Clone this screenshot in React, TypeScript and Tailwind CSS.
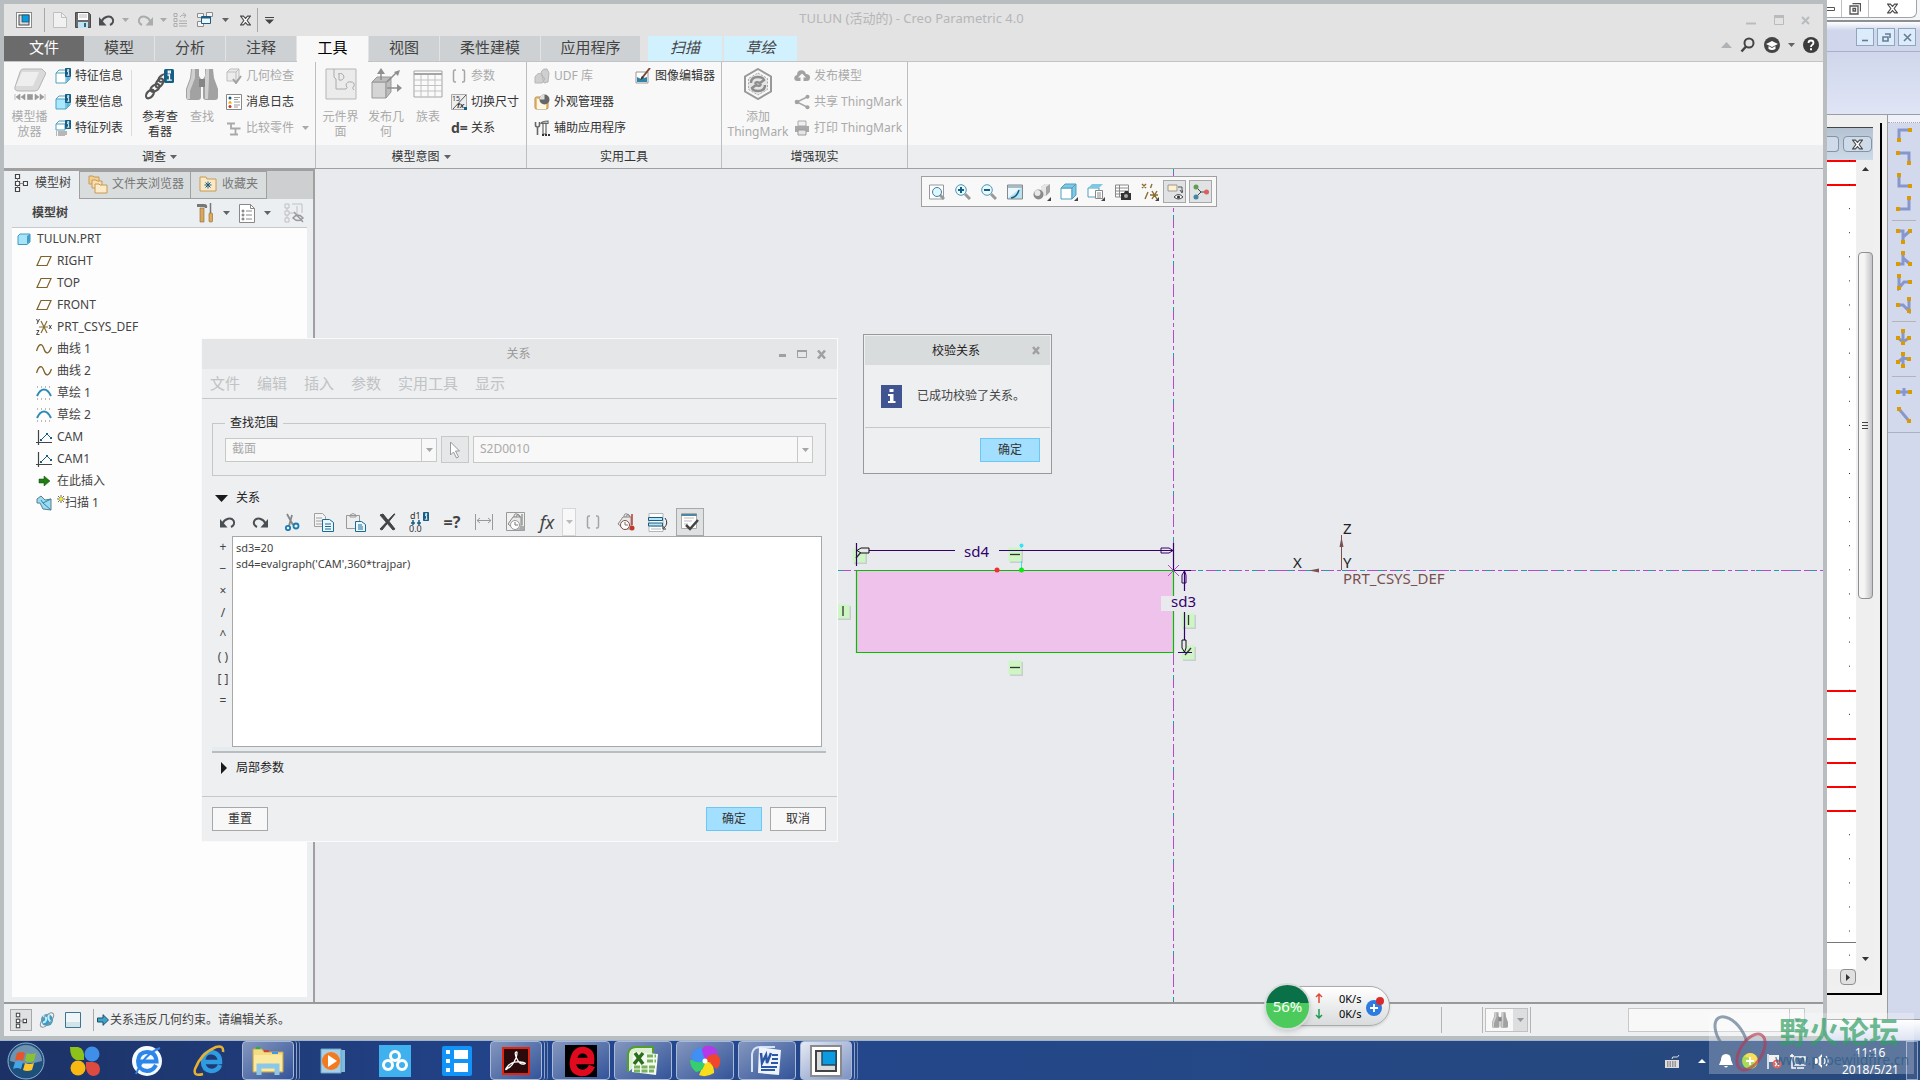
import type { ReactNode } from "react";
import clsx from "clsx";

type IconProps = { size?: number; w?: number; h?: number; vb?: string; children: ReactNode };

const Svg = ({ size = 16, w, h, vb, children }: IconProps) => (
  <svg
    width={w ?? size}
    height={h ?? size}
    viewBox={vb ?? `0 0 ${w ?? size} ${h ?? size}`}
    fill="none"
    className="shrink-0"
    aria-hidden="true"
  >
    {children}
  </svg>
);

const Caret = ({ color = "#5f6368" }: { color?: string }) => (
  <Svg w={7} h={4}>
    <path d="M0 0h7L3.500 4z" fill={color} />
  </Svg>
);

const InfoBadge = ({ x, y, s = 1 }: { x: number; y: number; s?: number }) => (
  <g transform={`translate(${x} ${y}) scale(${s})`}>
    <rect width="6" height="9" rx="0.8" fill="#155e86" />
    <path d="M2 3.600h1.600V7M1.800 7.200h2.600M2.600 1.600h1.200v1H2.600z" stroke="#fff" strokeWidth="0.900" />
  </g>
);

/* ---------- title bar icons ---------- */

const CreoIcon = ({ size = 16 }: { size?: number }) => (
  <Svg size={size} vb="0 0 16 16">
    <rect x="0.500" y="0.500" width="15" height="15" fill="#fff" stroke="#8a8a8a" />
    <rect x="3" y="3" width="10" height="10" fill="#d9dcdc" stroke="#444" />
    <path d="M6 3h7v7H6z" fill="#0a9be0" stroke="#24465a" strokeWidth="0.700" />
  </Svg>
);

const NewIcon = () => (
  <Svg w={14} h={16}>
    <path d="M.5.5h8l5 5v10H.5z" fill="#f1f1f1" stroke="#c0c0c0" />
    <path d="M8.500.5v5h5" stroke="#c0c0c0" />
  </Svg>
);

const SaveIcon = () => (
  <Svg>
    <path d="M.5.5h13l2 2v13H.5z" fill="#6b6b6b" stroke="#4a4a4a" />
    <rect x="3" y="1" width="10" height="7" fill="#fff" />
    <path d="M4 3h8M4 5h8" stroke="#bbb" />
    <rect x="3" y="10" width="10" height="6" fill="#bfe3f3" />
    <rect x="9" y="11" width="2" height="4" fill="#31637c" />
  </Svg>
);

const UndoIcon = ({ color = "#4a4f54" }: { color?: string }) => (
  <Svg w={16} h={12}>
    <path d="M2.500 7.500C5 2.500 11 1 13.500 4.500c1.500 2.500.500 5-2.500 6.500" stroke={color} strokeWidth="2" />
    <path d="M0 3v8.500h7.500z" fill={color} />
  </Svg>
);

const RedoIcon = ({ color = "#a9adb0" }: { color?: string }) => (
  <Svg w={16} h={12}>
    <path d="M13.500 7.500C11 2.500 5 1 2.500 4.500 1 7 2 9.500 5 11" stroke={color} strokeWidth="2" />
    <path d="M16 3v8.500H8.500z" fill={color} />
  </Svg>
);

const RegenIcon = () => (
  <Svg>
    <path d="M1 1.500h3v3H1zM1 6.500h3v3H1zM1 11.500h3v3H1zM6 9h8M6 11.500h8M6 14h8M7 5l2-2 3 .5M10 1l3 2-2 3" stroke="#adadad" />
  </Svg>
);

const WindowsIcon = () => (
  <Svg>
    <path d="M.5 1.500h6v4h-6zM9.500.5h6v4h-6zM.5 9.500h6v5h-6z" fill="#f5f5f5" stroke="#8d8d8d" />
    <path d="M4.500 4.500h9v7h-9z" fill="#eaf7fd" stroke="#1c5d80" />
    <path d="M4.500 5.500h9" stroke="#1c5d80" strokeWidth="2" />
  </Svg>
);

const CrossOutline = ({ w = 11 }: { w?: number }) => (
  <Svg w={w} h={w} vb="0 0 12 11">
    <path d="M.7.7h3L6 3.200 8.300.7h3L7.800 5.500l3.500 4.800h-3L6 7.800l-2.300 2.500h-3l3.500-4.800z" fill="#fff" stroke="#4a4a4a" strokeWidth="1.200" />
  </Svg>
);

/* ---------- ribbon icons ---------- */

const PlayerIcon = () => (
  <Svg size={32}>
    <path d="M9 1h19l4 4-7 15q-1 3-4 3H5q-5 0-4-4L6 4q1-3 3-3z" fill="#dadada" stroke="#b5b5b5" />
    <path d="M8 4h17l-6 14H2z" fill="#eee" />
    <path d="M1 26v6M2 29l4-3v6zM7 29l4-3v6zM31 26v6M30 29l-4-3v6zM25 29l-4-3v6zM13.500 26.500h5v5h-5z" fill="#999" stroke="#999" strokeWidth="0.600" />
  </Svg>
);

const CubeInfo = ({ fill, lines }: { fill: string; lines?: boolean }) => (
  <Svg>
    <path d={lines ? "M1 4h9v6H1z" : "M1 5h10v10H1z"} fill={fill} stroke="#4f9fbf" />
    <path d={lines ? "M1 4l3-3h7" : "M1 5l3-3h7M11 15l4-4V9"} stroke="#4f9fbf" />
    {!lines && <path d="M11.500 6l3 3v2l-3 3.500z" fill="#5cb8dc" />}
    {lines && <path d="M1 12h1M3 12h9M1 14h1M3 14h9M1 16h1M3 16h7" stroke="#777" />}
    <InfoBadge x={10} y={0} />
  </Svg>
);

const ChainIcon = () => (
  <Svg size={32}>
    <g stroke="#555" strokeWidth="2.200">
      <ellipse cx="6" cy="26" rx="5" ry="3" transform="rotate(-50 6 26)" />
      <ellipse cx="11" cy="20" rx="5" ry="3" transform="rotate(-35 11 20)" />
      <ellipse cx="15.500" cy="15" rx="5" ry="3" transform="rotate(-55 15.500 15)" />
      <ellipse cx="19" cy="10" rx="5" ry="3" transform="rotate(-35 19 10)" />
    </g>
    <rect x="20" y="1" width="10" height="14" rx="1.500" fill="#155e86" />
    <path d="M23.500 7h2v5M22.800 12.200h5M24.300 3.200h2v1.600h-2z" stroke="#fff" strokeWidth="1.300" />
  </Svg>
);

const Binoculars = ({ w = 32, h = 31 }: { w?: number; h?: number }) => (
  <Svg w={w} h={h} vb="0 0 32 31">
    <path d="M5 0h8v7l2 3v18q0 3-3 3H3q-3 0-3-3V20L4 9zM27 0h-8v7l-2 3v18q0 3 3 3h9q3 0 3-3V20L28 9z" fill="#a2a2a2" />
    <path d="M6 0h3v9L4 22v8H1V20L5 9zM20 0h3v9l-1 21h-3V9z" fill="#cfcfcf" />
    <path d="M13 10h6v8h-6z" fill="#858585" />
  </Svg>
);

const GeomCheck = () => (
  <Svg>
    <path d="M1 4l3-3h9v9l-3 3H1zM1 4h9v9M10 4l3-3" fill="#ececec" stroke="#bdbdbd" />
    <path d="M7 11l3 4 5-7" stroke="#a2a2a2" strokeWidth="2" />
  </Svg>
);

const LogIcon = () => (
  <Svg>
    <path d="M.5.5h15v15H.5z" fill="#fff" stroke="#888" />
    <circle cx="4" cy="4" r="1.500" fill="#155e86" />
    <path d="M2 9.500L4 6.500l2 3z" fill="#e8a800" />
    <circle cx="4" cy="12.500" r="1.500" fill="#c0392b" />
    <path d="M8 3.500h6M8 5.500h4M8 8h6M8 11h6M8 13h4" stroke="#999" />
  </Svg>
);

const CompareIcon = () => (
  <Svg>
    <path d="M1 3.500h8M5 3.500v5h9.500M9.500 8.500V14M4 14.500h8" stroke="#a9a9a9" strokeWidth="1.800" />
  </Svg>
);

const ComponentIcon = () => (
  <Svg size={32}>
    <path d="M1 1h30v30H1z" fill="#ebebeb" stroke="#b5b5b5" />
    <path d="M9 1v5q-1 4 2 5v10h10q2-1 0-4 1-4 5-3 4 0 3 4-3 2 0 4M13 6q5-2 6 3-1 4-5 3v-6" stroke="#aaa" />
  </Svg>
);

const PublishGeom = () => (
  <Svg size={32}>
    <path d="M2 14h14v16H2z" fill="#d5d5d5" stroke="#999" />
    <path d="M2 14l5-5h14l-5 5zM16 14l5-5v15l-5 6z" fill="#bcbcbc" stroke="#999" />
    <path d="M11 12V4M17 14L27 4M17 20h11" stroke="#8f8f8f" strokeWidth="1.500" />
    <path d="M11 0l4 6H7zM30 2l-2 6-4-4zM32 20l-5 4v-8z" fill="#8f8f8f" />
  </Svg>
);

const TableIcon = () => (
  <Svg w={30} h={30}>
    <path d="M1 2h28v26H1z" fill="#fafafa" stroke="#a5a5a5" />
    <path d="M1 5h28" stroke="#a5a5a5" strokeWidth="2" />
    <path d="M8 6v22M15 6v22M22 6v22M1 11h28M1 16.500h28M1 22h28" stroke="#c2c2c2" />
  </Svg>
);

const ParamIcon = ({ color = "#a5a5a5" }: { color?: string }) => (
  <Svg>
    <path d="M5 2H4Q2.500 2 2.500 3.500v9Q2.500 14 4 14h1M11 2h1q1.500 0 1.500 1.500v9q0 1.500-1.500 1.500h-1" stroke={color} strokeWidth="1.500" />
  </Svg>
);

const SwitchDim = () => (
  <Svg>
    <path d="M.5.5h15v15H.5z" fill="#eee" stroke="#aaa" />
    <path d="M15 1L2 15" stroke="#555" />
    <text x="1" y="7" fontSize="7" fill="#333" fontFamily="Noto Sans">15</text>
    <text x="6" y="14" fontSize="8" fontStyle="italic" fontWeight="700" fill="#333" fontFamily="Liberation Sans">fx</text>
    <path d="M13 13h3v3h-3z" fill="#155e86" />
  </Svg>
);

const DEquals = () => <span className="w-4 shrink-0 text-sm leading-4 font-bold text-[#444]">d=</span>;

const UdfIcon = () => (
  <Svg>
    <path d="M1 9q3-5 6-3l4 5-3 4H1zM7 4q2-4 6-3l2 4-1 9-4 1z" fill="#cfcfcf" stroke="#b5b5b5" />
  </Svg>
);

const AppearanceIcon = () => (
  <Svg>
    <rect x="1" y="3" width="13" height="12" rx="1.500" fill="#eebf78" stroke="#b98b45" />
    <path d="M3 5h8l1 3v7H3z" fill="#fff7e6" />
    <circle cx="10.500" cy="5.500" r="5" fill="#666" />
    <path d="M10.500.5v5h-5q.5-5 5-5z" fill="#ddd" />
  </Svg>
);

const AuxIcon = () => (
  <Svg>
    <path d="M1.500 2v3q0 2 2 2t2-2V2M3.500 7v8" stroke="#666" strokeWidth="1.600" />
    <path d="M7 3.500q1-2.500 7-2.500v2.500zM9 3h3v11H9z" fill="#fff" stroke="#666" strokeWidth="1.200" />
    <path d="M8 15h2M11 15h2M14 15h2" stroke="#333" strokeWidth="2" />
  </Svg>
);

const ImageEdit = () => (
  <Svg>
    <path d="M1 4h12v11H1z" fill="#fff" stroke="#999" />
    <path d="M2 9l4 2 6-2v5H2z" fill="#2f86a8" />
    <path d="M15 0L7 10" stroke="#7a4a32" strokeWidth="2" />
    <path d="M7 8l-2 4 4-2z" fill="#333" />
  </Svg>
);

const ThingMark = () => (
  <Svg w={30} h={32}>
    <path d="M15 1l13 7.500v15L15 31 2 23.500v-15z" stroke="#999" strokeWidth="2" />
    <path d="M15 5l9.500 5.500v11L15 27l-9.500-5.500v-11z" fill="#e5e5e5" stroke="#aaa" strokeDasharray="2 1.500" />
    <path d="M8 15q0-6 7-6 5 0 6 3l-4 3q-4-2-5 1M22 17q0 6-7 6-5 0-6-3l4-3q4 2 5-1" stroke="#8d8d8d" strokeWidth="2.400" />
  </Svg>
);

const CloudUp = () => (
  <Svg>
    <path d="M3.500 13Q0 13 .3 9.500.8 7 3 7 3 2.500 7.500 2.300 11 2.500 12 6q4 0 4 3.500T12.500 13H9.500V9.500H12L8 5.500 4 9.500h2.500V13z" fill="#a2a2a2" />
  </Svg>
);

const ShareIcon = () => (
  <Svg>
    <path d="M14 2.500L3 8l11 5.500" stroke="#a8a8a8" strokeWidth="1.500" />
    <circle cx="3" cy="8" r="2.300" fill="#a2a2a2" />
    <circle cx="13.500" cy="2.800" r="2" fill="#a2a2a2" />
    <circle cx="13.500" cy="13.200" r="2" fill="#a2a2a2" />
  </Svg>
);

const PrintIcon = () => (
  <Svg>
    <path d="M4 1h8v5H4z" fill="#eee" stroke="#aaa" />
    <path d="M1 6h14v6H1z" fill="#a8a8a8" />
    <path d="M4 10h8v5H4z" fill="#e5e5e5" stroke="#9a9a9a" />
  </Svg>
);

/* ---------- tree icons ---------- */

const TreeGlyph = ({ w = 14, h = 20 }: { w?: number; h?: number }) => (
  <Svg w={w} h={h} vb="0 0 14 20">
    <path d="M1.500 1.500h4v4h-4zM1.500 8.500h4v4h-4zM1.500 14.500h4v4h-4zM9.500 8.500h4v4h-4z" fill="#fff" stroke="#444" strokeWidth="1.200" />
    <path d="M3.500 5.500v3M3.500 12.500v2M5.500 10.500h4" stroke="#888" />
  </Svg>
);

const FoldersIcon = () => (
  <Svg w={20} h={20}>
    <path d="M1 2h4l1 1h5v7H1z" fill="#f3cf95" stroke="#c69a55" />
    <path d="M4 6h4l1 1h5v7H4z" fill="#f9dfb2" stroke="#c69a55" />
    <path d="M7 10h4l1 1h7v8H7z" fill="#fdebc8" stroke="#c69a55" />
  </Svg>
);

const FavIcon = () => (
  <Svg w={18} h={16}>
    <path d="M1 1h6l1 2h9v12H1z" fill="#fce8c4" stroke="#c69a55" />
    <path d="M9 5.500v7M5.500 9h7M6.500 6.500l5 5M11.500 6.500l-5 5" stroke="#155e86" />
  </Svg>
);

const ToolsIcon = () => (
  <Svg w={18} h={20}>
    <path d="M1 1h7q4 0 3 4H9l-1-1H1z" fill="#777" />
    <path d="M4 5h4v14H4z" fill="#d8a860" stroke="#8a642c" strokeWidth="0.600" />
    <path d="M14.500 0v11" stroke="#777" strokeWidth="1.500" />
    <rect x="13" y="10" width="3.500" height="9" rx="1" fill="#e0aa58" stroke="#8a642c" strokeWidth="0.600" />
  </Svg>
);

const ListDoc = () => (
  <Svg w={16} h={19}>
    <path d="M.5.5h11l4 4v14H.5z" fill="#fff" stroke="#888" />
    <circle cx="4" cy="7" r="1" stroke="#666" />
    <circle cx="4" cy="11" r="1" stroke="#666" />
    <circle cx="4" cy="15" r="1" stroke="#666" />
    <path d="M7 7h6M7 11h6M7 15h6M11.500.5v4h4" stroke="#888" />
  </Svg>
);

const HideTree = () => (
  <Svg w={20} h={20}>
    <path d="M1 1h4v4H1zM1 8h4v4H1zM1 15h4v4H1zM3 5v3M3 12v3M5 10h5M8 1h10v9M13 3v8" stroke="#bfbfbf" />
    <path d="M9 15q5-6 10 0-5 5-10 0zM10 9l9 10" stroke="#999" strokeWidth="1.500" />
  </Svg>
);

const PartIcon = () => (
  <Svg w={14} h={12}>
    <path d="M1 3l2-2h10v8l-3 2.500H1z" fill="#a9e3f8" stroke="#3c9cc6" />
    <path d="M10 3v8l3-2.500V1z" fill="#3f9fcb" />
  </Svg>
);
const PlaneIcon = () => (
  <Svg w={16} h={12}>
    <path d="M5 1.500h10l-4 9H1z" stroke="#7d6229" strokeWidth="1.200" />
  </Svg>
);
const CsysIcon = () => (
  <Svg>
    <path d="M3 8h9M5 2l6 12M11 2L5 14" stroke="#8a6d2f" strokeWidth="1.200" />
    <path d="M.5 0l1.500 3M3.500 0L1 5M.5 11.500H3l-2.500 4h3M13 6l2.500 4M15.500 6L13 10" stroke="#333" strokeWidth="0.900" />
  </Svg>
);
const CurveIcon = () => (
  <Svg w={16} h={12}>
    <path d="M.5 8C3 0 6 0 8 6s5 5 7.500-2" stroke="#7d6229" strokeWidth="1.300" />
  </Svg>
);
const SketchIcon = () => (
  <Svg w={16} h={14}>
    <path d="M1 1h14M1 13h14" stroke="#777" strokeDasharray="1 3" />
    <path d="M1 10Q4 3.500 8 3.500T15 10" stroke="#2d8bb8" strokeWidth="2" />
  </Svg>
);
const GraphIcon = () => (
  <Svg>
    <path d="M2.500 1v15M0 13.500h16" stroke="#444" strokeWidth="1.200" />
    <path d="M5 11l6-6 4 4" stroke="#155e86" />
    <path d="M4 10h2v2H4zM10 4h2v2h-2zM14 8h2v2h-2z" fill="#155e86" />
  </Svg>
);
const InsertIcon = () => (
  <Svg>
    <path d="M3 6h5V3l6 5-6 5v-3H3z" fill="#1f7d12" stroke="#0f4d08" strokeWidth="0.500" />
  </Svg>
);
const SweepIcon = () => (
  <Svg>
    <path d="M5 1l4 4 6-1v11l-8-1-3-6H1V4z" fill="#9ddcf0" stroke="#5a7f8c" />
    <path d="M7 8l8-4M7 8l8 7M7 8l-2-3" stroke="#2a86ad" />
  </Svg>
);

/* ---------- data ---------- */

const treeItems: { label: string; icon: ReactNode; star?: boolean }[] = [
  { label: "RIGHT", icon: <PlaneIcon /> },
  { label: "TOP", icon: <PlaneIcon /> },
  { label: "FRONT", icon: <PlaneIcon /> },
  { label: "PRT_CSYS_DEF", icon: <CsysIcon /> },
  { label: "曲线 1", icon: <CurveIcon /> },
  { label: "曲线 2", icon: <CurveIcon /> },
  { label: "草绘 1", icon: <SketchIcon /> },
  { label: "草绘 2", icon: <SketchIcon /> },
  { label: "CAM", icon: <GraphIcon /> },
  { label: "CAM1", icon: <GraphIcon /> },
  { label: "在此插入", icon: <InsertIcon /> },
  { label: "扫描 1", icon: <SweepIcon />, star: true },
];

const ribbonTabs = [
  { label: "模型", width: "w-[70px]" },
  { label: "分析", width: "w-[70px]" },
  { label: "注释", width: "w-[70px]" },
  { label: "工具", width: "w-[71px]", active: true },
  { label: "视图", width: "w-[70px]" },
  { label: "柔性建模", width: "w-[100px]" },
  { label: "应用程序", width: "w-[99px]" },
];

/* ---------- title bar + ribbon ---------- */

const IconButton = ({ label, className, children }: { label: string; className: string; children: ReactNode }) => (
  <button aria-label={label} className={clsx("flex shrink-0 items-center justify-center", className)}>
    {children}
  </button>
);

function TitleBar() {
  return (
    <div className="relative flex h-8 items-center bg-[#e3e3e3]">
      <div className="flex w-10 justify-center">
        <CreoIcon />
      </div>
      <span className="h-6 w-px bg-[#a8a8a8]" />
      <IconButton label="新建" className="ml-1 w-[22px]"><NewIcon /></IconButton>
      <IconButton label="保存" className="w-6"><SaveIcon /></IconButton>
      <IconButton label="撤消" className="w-6"><UndoIcon /></IconButton>
      <IconButton label="撤消列表" className="w-3"><Caret color="#aaa" /></IconButton>
      <IconButton label="重做" className="ml-0.5 w-6"><RedoIcon /></IconButton>
      <IconButton label="重做列表" className="w-3"><Caret color="#aaa" /></IconButton>
      <IconButton label="重新生成" className="w-6"><RegenIcon /></IconButton>
      <IconButton label="窗口" className="w-6"><WindowsIcon /></IconButton>
      <IconButton label="窗口列表" className="w-4"><Caret /></IconButton>
      <IconButton label="关闭" className="w-6"><CrossOutline /></IconButton>
      <span className="h-6 w-px bg-[#a8a8a8]" />
      <IconButton label="自定义" className="w-[22px]">
        <Svg w={9} h={7}><path d="M0 .5h9" stroke="#444" /><path d="M0 2.500h9L4.500 7z" fill="#444" /></Svg>
      </IconButton>
      <h1 className="absolute inset-x-0 top-1 pr-1 text-center text-[13px] leading-5 text-[#b4b6b8]">
        TULUN (活动的) - Creo Parametric 4.0
      </h1>
      <div className="relative ml-auto flex items-center pr-1.5">
        <IconButton label="最小化" className="w-7">
          <Svg w={10} h={12}><path d="M0 9.500h10" stroke="#b8bcbe" strokeWidth="2" /></Svg>
        </IconButton>
        <IconButton label="最大化" className="w-7">
          <Svg w={10} h={10}><path d="M.5.5h9v9h-9z" stroke="#b8bcbe" /><path d="M0 1.500h10" stroke="#b8bcbe" strokeWidth="3" /></Svg>
        </IconButton>
        <IconButton label="关闭窗口" className="w-6">
          <Svg w={9} h={9}><path d="M1 1l7 7M8 1L1 8" stroke="#b8bcbe" strokeWidth="2" /></Svg>
        </IconButton>
      </div>
    </div>
  );
}

function RibbonTabs() {
  return (
    <nav className="flex h-[26px] items-stretch border-b border-[#c2c5c7] bg-[#e3e3e3] text-[15px] text-[#444]">
      <button className="w-20 bg-[#6b6b6b] pb-[3px] text-white">文件</button>
      <div className="flex gap-px">
        {ribbonTabs.map((t) => (
          <button
            key={t.label}
            className={clsx(
              "pb-[3px]",
              t.width,
              t.active ? "-mt-px -mb-px border-t border-[#a0a0a0] bg-[#f8f8f8] text-black" : "bg-[#cdd1d3]"
            )}
          >
            {t.label}
          </button>
        ))}
      </div>
      <div className="ml-2 flex gap-0.5 italic">
        <button className="w-[74px] bg-[#d1f1ff] pb-[3px]">扫描</button>
        <button className="w-[73px] bg-[#d1f1ff] pb-[3px]">草绘</button>
      </div>
      <div className="ml-auto flex items-center gap-2 pr-1 pb-2">
        <Svg w={11} h={6}><path d="M0 6l5.500-6L11 6z" fill="#b0b3b5" /></Svg>
        <IconButton label="搜索" className="w-4">
          <Svg><circle cx="9" cy="6" r="4.500" stroke="#444" strokeWidth="2" /><path d="M6 9.500L1.500 14.500" stroke="#444" strokeWidth="2.500" /></Svg>
        </IconButton>
        <IconButton label="学习" className="w-4">
          <Svg><circle cx="8" cy="8" r="8" fill="#444" /><path d="M2 7l6-3 6 3-6 3zM4.500 9v3q3.500 2 7 0V9L8 11z" fill="#fff" /></Svg>
        </IconButton>
        <Caret />
        <IconButton label="帮助" className="w-4">
          <Svg><circle cx="8" cy="8" r="8" fill="#3c3c3c" /><path d="M5.500 6Q5.500 3.500 8 3.500T10.500 6Q10.500 7 9 8 8 8.600 8 10" stroke="#fff" strokeWidth="1.800" /><path d="M7 11.200h2v2H7z" fill="#fff" /></Svg>
        </IconButton>
      </div>
    </nav>
  );
}

const BigButton = ({ icon, lines, width, enabled }: { icon: ReactNode; lines: string[]; width: string; enabled?: boolean }) => (
  <button className={clsx("flex shrink-0 flex-col items-center pt-1.5", width, enabled ? "text-[#333]" : "text-[#aaa]")}>
    <span className="flex h-8 items-center">{icon}</span>
    <span className="mt-[9px] block text-xs leading-[15px]">
      {lines.map((l) => (
        <span key={l} className="block">{l}</span>
      ))}
    </span>
  </button>
);

const SmallButton = ({ icon, label, enabled, caret }: { icon: ReactNode; label: string; enabled?: boolean; caret?: boolean }) => (
  <button className={clsx("flex h-[26px] items-center gap-1 text-xs whitespace-nowrap", enabled ? "text-[#333]" : "text-[#aaa]")}>
    {icon}
    {label}
    {caret && <span className="ml-1"><Caret color="#aaa" /></span>}
  </button>
);

const Group = ({ title, width, caret, children }: { title: string; width: string; caret?: boolean; children: ReactNode }) => (
  <section className={clsx("flex shrink-0 flex-col border-r border-[#bcbfc1]", width)}>
    <div className="flex h-[83px] bg-[#f8f8f8]">{children}</div>
    <h2 className="flex h-[23px] items-center justify-center gap-1 bg-[#eceef0] text-xs text-[#333]">
      {title}
      {caret && <Caret />}
    </h2>
  </section>
);

function Ribbon() {
  return (
    <div className="flex border-b border-[#a0a0a0]">
      <Group title="调查" width="w-[312px]" caret>
        <BigButton icon={<PlayerIcon />} lines={["模型播", "放器"]} width="w-[51px]" />
        <div className="flex flex-col pt-px">
          <SmallButton enabled icon={<CubeInfo fill="#fff" />} label="特征信息" />
          <SmallButton enabled icon={<CubeInfo fill="#a9e9ff" />} label="模型信息" />
          <SmallButton enabled icon={<CubeInfo fill="#fff" lines />} label="特征列表" />
        </div>
        <span className="mt-2 ml-2 h-[66px] w-px bg-[#dcdcdc]" />
        <BigButton enabled icon={<ChainIcon />} lines={["参考查", "看器"]} width="w-[56px]" />
        <BigButton icon={<Binoculars />} lines={["查找"]} width="w-7" />
        <div className="ml-[10px] flex flex-col pt-px">
          <SmallButton icon={<GeomCheck />} label="几何检查" />
          <SmallButton enabled icon={<LogIcon />} label="消息日志" />
          <SmallButton icon={<CompareIcon />} label="比较零件" caret />
        </div>
      </Group>
      <Group title="模型意图" width="w-[211px]" caret>
        <BigButton icon={<ComponentIcon />} lines={["元件界", "面"]} width="w-[49px]" />
        <BigButton icon={<PublishGeom />} lines={["发布几", "何"]} width="w-[42px]" />
        <BigButton icon={<TableIcon />} lines={["族表"]} width="w-[42px]" />
        <div className="ml-0.5 flex flex-col pt-px">
          <SmallButton icon={<ParamIcon />} label="参数" />
          <SmallButton enabled icon={<SwitchDim />} label="切换尺寸" />
          <SmallButton enabled icon={<DEquals />} label="关系" />
        </div>
      </Group>
      <Group title="实用工具" width="w-[195px]">
        <div className="ml-[7px] flex w-[101px] flex-col pt-px">
          <SmallButton icon={<UdfIcon />} label="UDF 库" />
          <SmallButton enabled icon={<AppearanceIcon />} label="外观管理器" />
          <SmallButton enabled icon={<AuxIcon />} label="辅助应用程序" />
        </div>
        <div className="pt-px">
          <SmallButton enabled icon={<ImageEdit />} label="图像编辑器" />
        </div>
      </Group>
      <Group title="增强现实" width="w-[186px]">
        <BigButton icon={<ThingMark />} lines={["添加", "ThingMark"]} width="w-[72px]" />
        <div className="flex flex-col pt-px">
          <SmallButton icon={<CloudUp />} label="发布模型" />
          <SmallButton icon={<ShareIcon />} label="共享 ThingMark" />
          <SmallButton icon={<PrintIcon />} label="打印 ThingMark" />
        </div>
      </Group>
      <div className="flex flex-1 flex-col">
        <div className="h-[83px] bg-[#f8f8f8]" />
        <div className="h-[23px] bg-[#eceef0]" />
      </div>
    </div>
  );
}

/* ---------- navigator ---------- */

function ModelTree() {
  return (
    <aside className="flex w-[311px] shrink-0 flex-col border-t-2 border-r-2 border-[#a0a0a0] bg-[#eceff1] text-xs text-[#444]">
      <div className="flex h-7 bg-[#cecfd0]">
        <button className="flex w-[75px] items-center gap-[7px] bg-[#eceff1] pb-1 pl-2.5">
          <TreeGlyph />
          模型树
        </button>
        <button className="flex w-[112px] items-center gap-1 border border-[#a0a0a0] bg-[#d9dddd] pb-0.5 pl-2 text-[#777]">
          <FoldersIcon />
          文件夹浏览器
        </button>
        <button className="flex w-[76px] items-center gap-[5px] border border-l-0 border-[#a0a0a0] bg-[#d9dddd] pb-0.5 pl-2 text-[#777]">
          <FavIcon />
          收藏夹
        </button>
      </div>
      <div className="flex h-7 items-center pr-2 pl-7">
        <h2 className="font-bold">模型树</h2>
        <div className="ml-auto flex items-center gap-[9px]">
          <IconButton label="设置" className="w-[18px]"><ToolsIcon /></IconButton>
          <Caret />
          <IconButton label="显示" className="w-4"><ListDoc /></IconButton>
          <Caret />
          <IconButton label="隐藏" className="ml-[3px] w-[22px]"><HideTree /></IconButton>
        </div>
      </div>
      <div className="mr-[6px] mb-[5px] ml-2 flex-1 border-t border-[#c8cbcd] bg-[#fdfdfd]">
        <div className="flex h-[22px] items-center gap-1.5 pl-[5px]">
          <PartIcon />
          TULUN.PRT
        </div>
        <ul>
          {treeItems.map((item) => (
            <li key={item.label} className="flex h-[22px] items-center gap-[5px] pl-6">
              {item.icon}
              <span className="flex">
                {item.star && (
                  <Svg w={8} h={8}>
                    <path d="M4 0v8M0 4h8M1 1l6 6M7 1L1 7" stroke="#444" strokeWidth="0.800" />
                    <path d="M2.500 2.500h3v3h-3z" fill="#ffee00" />
                  </Svg>
                )}
                {item.label}
              </span>
            </li>
          ))}
        </ul>
      </div>
    </aside>
  );
}

/* ---------- graphics area ---------- */

const Magnifier = ({ sign }: { sign: string }) => (
  <Svg>
    <path d="M10 10l5 5" stroke="#999" strokeWidth="3" />
    <circle cx="6" cy="6" r="5.300" fill="#eaf8fe" stroke="#4d97b5" />
    <path d={sign} stroke="#155e86" strokeWidth="2" />
  </Svg>
);

const Corner = () => <path d="M18 14v4h-4z" fill="#444" />;

function ViewToolbar() {
  return (
    <div className="absolute top-[7px] left-[606px] flex h-[31px] items-center border border-[#a0a0a0] bg-[#f8f8f8] px-0.5">
      <IconButton label="重新调整" className="w-[26px]">
        <Svg><path d="M.5 1h14v14H.5z" fill="#fff" stroke="#999" /><path d="M10 10l5 5" stroke="#999" strokeWidth="3" /><circle cx="8" cy="8" r="4.500" fill="#e2f5fd" stroke="#2f86a8" /></Svg>
      </IconButton>
      <IconButton label="放大" className="w-[26px]"><Magnifier sign="M6 3v6M3 6h6" /></IconButton>
      <IconButton label="缩小" className="w-[26px]"><Magnifier sign="M3 6h6" /></IconButton>
      <IconButton label="重画" className="w-[26px]">
        <Svg><path d="M.5 1h15v14H.5z" fill="#b6e2f2" stroke="#888" /><path d="M1 14V4h13z" fill="#eaf7fc" /><path d="M4 14q6-1 8-8" stroke="#155e86" strokeWidth="1.500" /><path d="M1 3h14" stroke="#999" /></Svg>
      </IconButton>
      <IconButton label="渲染" className="w-[27px]">
        <Svg size={18}><path d="M8 4l4-3h5v8l-4 4-5-2z" fill="#a5a5a5" /><path d="M8 4l4-3h5l-4 3v9l-5-2z" fill="#e6e6e6" /><circle cx="5.500" cy="11.500" r="5" fill="#8a8a8a" /><circle cx="4.500" cy="10" r="3" fill="#e8e8e8" /><Corner /></Svg>
      </IconButton>
      <IconButton label="显示样式" className="w-[27px]">
        <Svg size={18}><path d="M1 5h11v11H1z" fill="#fff" stroke="#4f9fbf" /><path d="M1 5l4-4h11l-4 4zM12 5l4-4v11l-4 4z" fill="#7fc8e4" stroke="#4f9fbf" /><Corner /></Svg>
      </IconButton>
      <IconButton label="已保存方向" className="w-[27px]">
        <Svg size={18}><path d="M1 5h11v9H1z" fill="#fff" stroke="#4f9fbf" /><path d="M1 5l4-4h11l-4 4z" fill="#7fc8e4" /><path d="M8.500 7.500h7v8h-7zM10 10h4M10 12h4M10 14h4" fill="#fff" stroke="#888" /><Corner /></Svg>
      </IconButton>
      <IconButton label="视图管理器" className="w-[27px]">
        <Svg><path d="M.5 1h13v12H.5zM.5 4h13M.5 7h13M.5 10h13M4.500 1v12" fill="#fff" stroke="#888" /><path d="M6 9h3l1-2h3l1 2h2v7H6z" fill="#333" /><circle cx="11" cy="12" r="2" fill="#aaa" /></Svg>
      </IconButton>
      <IconButton label="基准显示" className="w-[27px]">
        <Svg size={18}><path d="M1 1l4 4M5 1L1 5M11 1L9.500 5M7 9l-3 7M9 12h8M11 8l5 8M16 8l-5 8" stroke="#8a6d2f" strokeWidth="1.400" /><Corner /></Svg>
      </IconButton>
      <button aria-label="注释显示" className="flex size-[23px] items-center justify-center border border-[#a8a8a8] bg-[#e0e2e3]">
        <Svg><path d="M1 1h9v6H1z" fill="#fff1d0" stroke="#999" /><path d="M11 3h4v5M13 6l2 3 1-3" stroke="#555" /><path d="M7 13q4.500-5 9 0-4.500 4-9 0z" fill="#fff" stroke="#444" /><circle cx="11.500" cy="13" r="1.500" fill="#333" /></Svg>
      </button>
      <button aria-label="旋转中心" className="mr-0.5 ml-[3px] flex size-[23px] items-center justify-center border border-[#a8a8a8] bg-[#e0e2e3]">
        <Svg><path d="M3 3l5 5h6M8 8l-5 5" stroke="#444" /><circle cx="3" cy="3" r="2.500" fill="#5f9e4f" /><circle cx="13.500" cy="8" r="2.500" fill="#d9615b" /><circle cx="3" cy="13" r="2.500" fill="#4285a5" /></Svg>
      </button>
    </div>
  );
}

const Constraint = ({ x, y, d }: { x: number; y: number; d: string }) => (
  <g transform={`translate(${x} ${y})`}>
    <path d="M-5-5H8V9H-5z" fill="#c9cdd0" />
    <path d="M-6.500-6.500h13v14h-13z" fill="#cdf6c4" />
    <path d={d} stroke="#333" strokeWidth="1.300" />
  </g>
);

/* sketch coordinates are measured from the corner of the window */
function Sketch() {
  return (
    <svg className="absolute inset-0 size-full" fill="none" fontFamily="Noto Sans, sans-serif">
      <g transform="translate(-315 -169)">
        <path d="M1173.500 169V1002" stroke="#b54ad0" strokeDasharray="13 3 4 3" />
        <path d="M1173.500 169V1002" stroke="#1f9ea5" strokeDasharray="4 42" />
        <path d="M838 570.500H2600" stroke="#b54ad0" strokeDasharray="13 3 4 3" />
        <path d="M838 570.500H2600" stroke="#1f9ea5" strokeDasharray="5 13" />
        <path d="M856.500 570.500h317v82h-317z" fill="#eec2ea" stroke="#00c000" strokeWidth="1.200" />

        <Constraint x={859} y={555} d="M-3 3L3-4" />
        <Constraint x={843} y={611} d="M0-5V5" />
        <Constraint x={1015} y={554} d="M-5 .5H5" />
        <Constraint x={1015} y={667} d="M-5 .5H5" />
        <Constraint x={1188} y={620} d="M.5-5V5" />
        <Constraint x={1188} y={652} d="M-3 3L3-4" />

        <g stroke="#35006b" strokeWidth="1.200">
          <path d="M856.500 543v23M1173.500 543v27M857 550.500h98M999 550.500h174" />
          <path d="M1174 570.500h17M1184.500 571v20M1184.500 612v40M1178 652.500h14" />
        </g>
        <path d="M857 550.500l4-2.500h8v5h-8z" fill="#e8eaee" stroke="#111" />
        <path d="M1173 550.500l-4-2.500h-8v5h8z" stroke="#35006b" />
        <path d="M1184.500 571l-2.500 4v8h4v-8z" stroke="#35006b" />
        <path d="M1184.500 652l-2.500-4v-8h4v8z" fill="#e8eaee" stroke="#111" />
        <path d="M1161 596h24v15h-24z" fill="#e8eaee" />
        <text x="964" y="557" fontSize="15" fill="#35006b">sd4</text>
        <text x="1171" y="607" fontSize="15" fill="#35006b">sd3</text>

        <path d="M1021.500 545v25" stroke="#35e3f5" strokeDasharray="3 13 8 2" />
        <circle cx="1021.500" cy="545.500" r="2" fill="#35e3f5" />
        <circle cx="1021.500" cy="570" r="2.500" fill="#10e810" />
        <circle cx="997" cy="570" r="2.500" fill="#f03030" />
        <path d="M1168 565l11 11M1179 565l-11 11" stroke="#b54ad0" />

        <path d="M1341.500 535v35" stroke="#7a5050" />
        <path d="M1341.500 537l-2 10h4zM1309 570.500l10-2v4z" fill="#7a5050" />
        <text x="1293" y="568" fontSize="15" fill="#222">X</text>
        <text x="1343" y="568" fontSize="15" fill="#222">Y</text>
        <text x="1343" y="534" fontSize="15" fill="#222">Z</text>
        <text x="1343" y="584" fontSize="15" fill="#7a5050">PRT_CSYS_DEF</text>
      </g>
    </svg>
  );
}

/* ---------- dialogs ---------- */

const operators = ["+", "−", "×", "/", "^", "( )", "[ ]", "="];

const SelectBox = ({ label, value, className }: { label: string; value: string; className: string }) => (
  <div className={clsx("relative border border-[#c8c8c8] bg-[#f8f8f8]", className)}>
    <select aria-label={label} disabled className="block size-full appearance-none pb-0.5 pl-1.5 text-xs text-[#aaa]">
      <option>{value}</option>
    </select>
    <span className="pointer-events-none absolute inset-y-0 right-0 flex w-[15px] items-center justify-center border-l border-[#c8c8c8]">
      <Caret color="#a5a5a5" />
    </span>
  </div>
);

const DocCopy = () => (
  <Svg w={20} h={19}>
    <path d="M.5.5h8l3 3v10H.5zM2 5h6M2 8h6M2 11h6" fill="#f4f4f4" stroke="#a0a0a0" />
    <path d="M8.500 6.500h7l4 3v9h-11zM11 11h6M11 13.500h6M11 16h6" fill="#e9f6fc" stroke="#1c6a92" />
  </Svg>
);

const ClipPaste = () => (
  <Svg w={20} h={19}>
    <path d="M.5 2.500h13v13H.5zM4 4V2q3-3 6 0v2z" fill="#eee" stroke="#999" />
    <path d="M9.500 8.500h6l4 3v7h-10zM12 12h4M12 14h5M12 16h5" fill="#e9f6fc" stroke="#1c6a92" />
  </Svg>
);

const GaugeIcon = ({ red }: { red?: boolean }) => (
  <Svg w={20} h={20}>
    {!red && <path d="M.5.5h18v18H.5z" fill="#f1f1f1" stroke="#999" />}
    <path d="M2 12L7 5h8v12H8zM8 5q0-4 3-3t3 3M10 5q2-5 4 0" fill="#e9e9e9" stroke="#888" />
    <circle cx="9" cy="13" r="4.500" fill="#fff" stroke={red ? "#8a4a42" : "#999"} />
    <path d="M9 10v3h3" stroke="#777" />
    <path d="M16 2v11" stroke={red ? "#c0392b" : "#999"} strokeWidth="1.500" />
    <circle cx="16" cy="16" r="2.500" fill={red ? "#c0392b" : "#aaa"} />
  </Svg>
);

function RelationToolbar() {
  return (
    <div className="flex h-7 items-center text-[#444]">
      <IconButton label="撤消" className="w-8"><UndoIcon /></IconButton>
      <IconButton label="重做" className="w-8"><RedoIcon color="#4a4f54" /></IconButton>
      <IconButton label="剪切" className="w-8">
        <Svg size={18}><path d="M4 1l6 11M9 2L6 13" stroke="#888" strokeWidth="1.800" /><circle cx="5" cy="15" r="2.200" stroke="#1c7cae" strokeWidth="1.800" /><circle cx="13" cy="13" r="2.500" stroke="#1c7cae" strokeWidth="1.800" /></Svg>
      </IconButton>
      <IconButton label="复制" className="w-8"><DocCopy /></IconButton>
      <IconButton label="粘贴" className="w-8"><ClipPaste /></IconButton>
      <IconButton label="删除" className="w-8">
        <Svg w={18} h={18}><path d="M1 2l3-1 12 15-2 1zM16 1L3 17l-2-1L15 1z" fill="#444" stroke="#444" /></Svg>
      </IconButton>
      <IconButton label="尺寸值" className="w-8">
        <Svg w={22} h={22}>
          <text x="1" y="8" fontSize="9" fill="#333" fontFamily="Noto Sans">d1</text>
          <path d="M4 9v5M2 12h4M10 9v5M8 12h4" stroke="#155e86" strokeWidth="1.500" />
          <text x="0" y="21" fontSize="9" fill="#333" fontFamily="Noto Sans">0.0</text>
          <InfoBadge x={14} y={1} />
        </Svg>
      </IconButton>
      <IconButton label="计算" className="w-8 text-base font-bold">=?</IconButton>
      <IconButton label="尺寸" className="w-8">
        <Svg w={18} h={16}><path d="M.5 0v16M17.500 0v16M2 6.500h14M5 4L2 6.500 5 9M13 4l3 2.500L13 9" stroke="#999" /></Svg>
      </IconButton>
      <IconButton label="单位" className="w-8"><GaugeIcon /></IconButton>
      <IconButton label="函数" className="w-[30px] text-lg italic">fx</IconButton>
      <IconButton label="函数列表" className="h-7 w-3.5 border border-[#d5d7d9] bg-[#f8f8f8]"><Caret color="#bbb" /></IconButton>
      <IconButton label="括号" className="w-[34px]"><ParamIcon /></IconButton>
      <IconButton label="单位检查" className="w-8"><GaugeIcon red /></IconButton>
      <IconButton label="排序" className="w-8">
        <Svg w={20} h={19}><path d="M1 .5h14v18H1zM3 13h10M3 16h10" fill="#fff" stroke="#b5b5b5" /><path d="M.5 4.500h14v3H.5zM.5 10h14v3H.5z" fill="#b9e2f3" stroke="#155e86" /><path d="M17 5q4 5-1 10M15 13v3h3" stroke="#333" /></Svg>
      </IconButton>
      <button aria-label="校验" className="ml-0.5 flex size-7 items-center justify-center border border-[#a8a8a8] bg-[#dfe2e3]">
        <Svg w={18} h={18}><path d="M.5.5h15v15H.5z" fill="#fff" stroke="#aaa" /><path d="M.5 2h15" stroke="#155e86" strokeWidth="1.500" /><path d="M3 5h10M3 8h8M3 11h4" stroke="#bbb" /><path d="M5 12l4 4 8-9" stroke="#444" strokeWidth="2.500" /></Svg>
      </button>
    </div>
  );
}

const DialogButton = ({ label, primary, className }: { label: string; primary?: boolean; className: string }) => (
  <button
    className={clsx(
      "h-6 border text-xs text-[#333]",
      className,
      primary ? "border-[#6cc7f7] bg-[#a3dfff]" : "border-[#a8a8a8] bg-[#f8f8f8]"
    )}
  >
    {label}
  </button>
);

function RelationsDialog() {
  return (
    <div role="dialog" aria-label="关系" className="absolute top-[338px] left-[201px] w-[637px] border border-[#fafafa] bg-[#edeff1]">
      <div className="relative flex h-[30px] items-center justify-end gap-2.5 bg-[#e5e6e8] pr-[11px]">
        <h2 className="absolute inset-x-0 pr-0.5 text-center text-xs text-[#999]">关系</h2>
        <Svg w={8} h={10}><path d="M0 6.500h7" stroke="#a0a0a0" strokeWidth="3" /></Svg>
        <Svg w={10} h={8}><path d="M.5 1h9v6.500h-9z" stroke="#a0a0a0" /><path d="M0 1h10" stroke="#a0a0a0" strokeWidth="2" /></Svg>
        <Svg w={9} h={9}><path d="M1 .5l7 8M8 .5l-7 8" stroke="#a0a0a0" strokeWidth="2.500" /></Svg>
      </div>
      <div className="flex h-[30px] items-center gap-[17px] border-b border-[#c5c7c9] pl-2 text-[15px] text-[#c0c2c4]">
        {["文件", "编辑", "插入", "参数", "实用工具", "显示"].map((m) => (
          <button key={m}>{m}</button>
        ))}
      </div>
      <div className="pr-[11px] pl-2.5">
        <fieldset className="mt-4 border border-[#c5c7c9] px-3 pt-[5px] pb-3">
          <legend className="px-[5px] text-xs leading-4 text-[#222]">查找范围</legend>
          <div className="flex h-[27px] items-center gap-1">
            <SelectBox label="对象类型" value="截面" className="h-6 w-[212px]" />
            <button aria-label="选择" className="flex h-[27px] w-7 items-center justify-center border border-[#c8c8c8] bg-[#e5e7e9]">
              <Svg w={12} h={18}><path d="M1.500 1v13l3-3 3 6 2-1-3-6h4z" fill="#fff" stroke="#999" /></Svg>
            </button>
            <SelectBox label="对象" value="S2D0010" className="h-[27px] flex-1" />
          </div>
        </fieldset>
        <button className="mt-3 flex h-5 items-center gap-2 pl-[3px] text-xs text-[#222]">
          <Svg w={13} h={7}><path d="M0 0h13L6.500 7z" fill="#1a1a1a" /></Svg>
          关系
        </button>
        <RelationToolbar />
        <div className="flex pr-1">
          <div className="flex w-5 flex-col pl-0.5 text-xs text-[#444]">
            {operators.map((op) => (
              <button key={op} className="h-[22px] whitespace-nowrap">{op}</button>
            ))}
          </div>
          <textarea
            aria-label="关系编辑器"
            spellCheck={false}
            className="block h-[211px] flex-1 resize-none border border-[#a8a8a8] bg-white px-[3px] py-[3px] text-[11px] leading-4 text-[#444]"
            defaultValue={"sd3=20\nsd4=evalgraph('CAM',360*trajpar)"}
          />
        </div>
        <div className="h-1.5 border-b-2 border-[#b9bdc0] bg-[#e6ebee]" />
        <button className="mb-3.5 flex h-[29px] items-center gap-[9px] pl-[9px] text-xs text-[#222]">
          <Svg w={6} h={12}><path d="M0 0v12l6-6z" fill="#1a1a1a" /></Svg>
          局部参数
        </button>
      </div>
      <div className="flex gap-2 border-t border-[#c5c7c9] py-2.5 pr-[11px] pl-2.5">
        <DialogButton label="重置" className="mr-auto w-14" />
        <DialogButton label="确定" primary className="w-14" />
        <DialogButton label="取消" className="w-14" />
      </div>
    </div>
  );
}

function VerifyDialog() {
  return (
    <div role="dialog" aria-label="校验关系" className="absolute top-[334px] left-[863px] w-[189px] border border-[#999] bg-[#edeff1] p-px">
      <div className="relative flex h-[29px] items-center justify-end bg-[#d9dcdd] pr-2.5">
        <h2 className="absolute inset-x-0 pr-[3px] text-center text-xs text-[#222]">校验关系</h2>
        <Svg w={8} h={9}><path d="M1 1l6 7M7 1L1 8" stroke="#a0a0a0" strokeWidth="2.500" /></Svg>
      </div>
      <div className="flex h-[62px] items-center gap-[15px] pl-4 text-xs text-[#444]">
        <Svg w={21} h={23}>
          <path d="M0 0h21v23H0z" fill="#3f5490" />
          <path d="M8.500 4h4v3h-4zM7 9h5.500v7h2v2H7v-2h2v-5H7z" fill="#fff" />
        </Svg>
        已成功校验了关系。
      </div>
      <div className="flex justify-end border-t border-[#c5c7c9] py-2.5 pr-2.5">
        <DialogButton label="确定" primary className="w-[60px]" />
      </div>
    </div>
  );
}

/* ---------- status bar ---------- */

function StatusBar() {
  return (
    <footer className="flex h-[34px] items-center border-t-2 border-[#999] bg-[#edeff1] pl-1.5 text-xs text-[#444]">
      <button aria-label="导航器" className="flex size-[22px] items-center justify-center border border-[#a8a8a8] bg-[#dfe2e3]">
        <TreeGlyph w={12} h={17} />
      </button>
      <IconButton label="浏览器" className="w-[30px]">
        <Svg><circle cx="8" cy="8" r="6" fill="#3b9cc9" /><path d="M4 4q4 1 3 4t-3 2M10 3q-2 4 2 7" stroke="#c9eefb" strokeWidth="2" /><ellipse cx="8" cy="8" rx="9" ry="4" transform="rotate(-48 8 8)" stroke="#8b9298" /></Svg>
      </IconButton>
      <IconButton label="全屏" className="w-[22px]">
        <Svg><path d="M.5.5h15v15H.5z" fill="#f0f6f8" stroke="#3d7590" /><path d="M1 10h14v5H1z" fill="#d3e3ea" /></Svg>
      </IconButton>
      <span className="ml-[9px] h-[22px] w-px bg-[#a8a8a8]" />
      <div className="ml-[3px] flex items-center gap-px">
        <Svg w={12} h={12}><path d="M.5 4H6V.7L11.500 6 6 11.300V8H.5z" fill="#3ba4cc" stroke="#1a4e68" /></Svg>
        关系违反几何约束。请编辑关系。
      </div>
      <div className="ml-auto flex items-center">
        <span className="h-[26px] w-px bg-[#b5b5b5]" />
        <span className="ml-10 h-[26px] w-px bg-[#b5b5b5]" />
        <div className="ml-0.5 flex h-6 w-[43px] items-stretch border border-[#c0c0c0] bg-[#f8f8f8]">
          <button aria-label="查找" className="flex flex-1 items-center justify-center"><Binoculars w={16} h={16} /></button>
          <button aria-label="查找选项" className="flex w-3.5 items-center justify-center bg-[#dcdedf]"><Caret color="#999" /></button>
        </div>
        <span className="ml-0.5 h-[26px] w-px bg-[#b5b5b5]" />
        <SelectBox label="过滤器" value="" className="mr-[18px] ml-[97px] h-6 w-[177px]" />
      </div>
    </footer>
  );
}

function SpeedWidget() {
  return (
    <div className="absolute right-[433px] bottom-[5px] flex h-[50px] w-[126px] items-center">
      <div className="absolute inset-y-[5px] right-0 left-6 flex items-center rounded-r-full border border-[#aaa] bg-linear-to-b from-white to-[#d9dbdc] shadow" />
      <div className="relative flex size-[47px] items-center justify-center rounded-full border-2 border-[#d5dbd8] bg-linear-to-b from-[#0a7048] from-42% to-[#4ccb5c] to-42% text-[15px] text-white shadow-md">
        56%
      </div>
      <div className="relative ml-1 flex flex-col gap-1">
        <Svg w={8} h={12}><path d="M4 11V2M1 5l3-3 3 3" stroke="#e04a38" strokeWidth="1.500" /></Svg>
        <Svg w={8} h={12}><path d="M4 1v9M1 7l3 3 3-3" stroke="#239a52" strokeWidth="1.500" /></Svg>
      </div>
      <div className="relative ml-4 text-[11px] leading-[15px] text-black">
        <p>0K/s</p>
        <p>0K/s</p>
      </div>
      <div className="absolute right-1.5">
        <Svg w={18} h={22}>
          <circle cx="8" cy="13" r="8" fill="#2d7be0" />
          <path d="M8 9v8M4 13h8" stroke="#fff" strokeWidth="1.800" />
          <circle cx="14" cy="6" r="4" fill="#d92b2b" />
        </Svg>
      </div>
    </div>
  );
}

/* ---------- application behind ---------- */

const wireIcons = [
  "M4 14V4h11|4,14 15,4",
  "M3 4h11v10|3,4 14,14",
  "M4 3v11h11|4,3 15,14",
  "M14 3v11H3|14,3 3,14",
  "sep",
  "M3 4h5v11M8 10l7-6|3,4 15,4 8,15",
  "M3 14h5V3M8 8l7 6|3,14 15,14 8,3",
  "M4 3v12L9 9h6|4,3 4,15 15,9",
  "M3 9h5l6 6V3|3,9 14,15 14,3",
  "sep",
  "M8 3v12M3 10l5 4 6-4|8,3 8,15 3,10 14,10",
  "M8 3v12M3 11l5-4 6 1|8,3 8,15 3,11 14,8",
  "sep",
  "M3 9h11M9 5v8|3,9 15,9",
  "M4 3l10 12|4,3 14,15",
];

const MdiButton = ({ label, d }: { label: string; d: string }) => (
  <button aria-label={label} className="flex size-[18px] items-center justify-center border border-[#90a5bf] bg-[#dcecfb]">
    <Svg w={9} h={9}><path d={d} stroke="#667d98" strokeWidth="1.600" /></Svg>
  </button>
);

function BackgroundApp() {
  return (
    <div className="flex w-[93px] shrink-0 flex-col bg-[#f0f0f0]">
      <div className="flex h-[22px] items-start border-b-2 border-[#8c8f94] bg-[#f4f5f7]">
        <div className="flex h-[18px] w-[90px] overflow-hidden rounded-br-md border-r border-b border-[#a0a3a8] bg-white">
          <div className="flex w-[15px] items-center border-r border-[#c0c0c0]">
            <Svg w={8} h={4}><path d="M-3 .5H7.500v3H-3z" stroke="#555" /></Svg>
          </div>
          <div className="flex w-[27px] items-center justify-center border-r border-[#c0c0c0]">
            <Svg w={12} h={12}><path d="M3.500.5h8v8M1 3h8v8H1zM4 5.500h2.500V8H4z" stroke="#555" strokeWidth="1.300" /></Svg>
          </div>
          <div className="flex flex-1 items-center justify-center"><CrossOutline /></div>
        </div>
      </div>
      <div className="flex h-[30px] items-end justify-end gap-[3px] border-b border-[#a9b0c6] bg-linear-to-b from-white to-[#d0d7ec] to-30% pr-1 pb-[5px]">
        <MdiButton label="最小化文档" d="M1 7.500h6" />
        <MdiButton label="还原文档" d="M3 1h5v4M1 4h5v4H1z" />
        <MdiButton label="关闭文档" d="M1 1l7 7M8 1L1 8" />
      </div>
      <div className="h-[63px] border-b border-[#9a9da3] bg-linear-to-b from-[#d0d7ec] to-[#dfe5f5]" />
      <div className="flex flex-1">
        <div className="flex flex-1 flex-col border-r border-[#9b9b9b] pt-2 pr-[5px] pb-6">
          <div className="flex flex-1 flex-col border-r-2 border-b-2 border-black pr-[7px] pb-2">
            <div className="mt-1 flex h-[33px] items-center gap-1 border-t border-[#444] bg-linear-to-b from-[#b4c2d2] to-[#cddbe9] pr-px">
              <span className="h-4 w-3 rounded-r-sm border border-l-0 border-[#8593a6] bg-[#cfdbe8]" />
              <span className="flex h-4 flex-1 items-center justify-center rounded-sm border border-[#8593a6] bg-[#cfdbe8]"><CrossOutline /></span>
            </div>
            <div className="flex flex-1">
              <svg className="h-auto w-[29px] bg-white">
                <defs>
                  <pattern id="grid-dots" width="29" height="24.080" patternUnits="userSpaceOnUse">
                    <path d="M22 0h1v1h-1z" fill="#222" />
                  </pattern>
                </defs>
                <path
                  d="M0 1h29M0 25h29M0 531h29M0 579h29M0 603h29M0 627h29M0 651h29"
                  stroke="#f00"
                  strokeWidth="2"
                />
                <path d="M0 782.500h29" stroke="#777" />
                <rect width="29" height="809" fill="url(#grid-dots)" />
              </svg>
              <div className="ml-px flex flex-1 flex-col items-center bg-[#efefef]">
                <span className="pt-[7px] pb-2"><Svg w={7} h={4}><path d="M0 4h7L3.500 0z" fill="#333" /></Svg></span>
                <div className="mt-[73px] flex h-[347px] w-[15px] flex-col items-center justify-center gap-0.5 rounded-sm border border-[#909090] bg-linear-to-r from-[#f5f5f5] from-40% to-[#c4c4c8]">
                  <span className="h-px w-1.5 bg-[#444]" />
                  <span className="h-px w-1.5 bg-[#444]" />
                  <span className="h-px w-1.5 bg-[#444]" />
                </div>
                <span className="mt-auto pb-2"><Svg w={7} h={4}><path d="M0 0h7L3.500 4z" fill="#333" /></Svg></span>
              </div>
            </div>
            <div className="flex h-4 justify-end bg-[#efefef] pr-[17px]">
              <span className="flex size-4 items-center justify-center rounded-sm border border-[#909090] bg-[#e0e0e0]">
                <Svg w={4} h={7}><path d="M0 0v7l4-3.500z" fill="#333" /></Svg>
              </span>
            </div>
          </div>
        </div>
        <div className="flex w-8 flex-col items-center bg-[#d3d9ec]">
          <div className="h-2 w-full border-b border-dotted border-[#aaa] bg-[#eef1fa]" />
          <div className="flex w-full flex-col items-center border-b border-[#a9b0c6] pb-1.5">
            {wireIcons.map((spec, i) => {
              if (spec === "sep") return <span key={i} className="mt-[5px] mb-[3px] h-px w-6 shrink-0 bg-[#b5b5b5]" />;
              const [d, nodes] = spec.split("|");
              return (
                <span key={i} className="flex h-[23px] items-center">
                  <Svg w={18} h={18}>
                    <path d={d} stroke="#8797cc" strokeWidth="3" />
                    {nodes.split(" ").map((n) => {
                      const [x, y] = n.split(",").map(Number);
                      return <rect key={n} x={x - 2} y={y - 2} width="4" height="4" fill="#d99b00" />;
                    })}
                  </Svg>
                </span>
              );
            })}
          </div>
        </div>
      </div>
      <div className="h-[21px] border-t border-[#9b9b9b] bg-linear-to-b from-white to-[#d5dcef]" />
    </div>
  );
}

/* ---------- taskbar ---------- */

const taskItems: { name: string; open?: boolean; active?: boolean; stack?: boolean; icon: ReactNode }[] = [
  {
    name: "四叶草",
    icon: (
      <Svg size={30}>
        <path d="M0 1h8q7 1 6 13H6Q0 12 0 1z" fill="#8cc21a" />
        <circle cx="22" cy="8" r="7.500" fill="#3f8fe8" />
        <circle cx="8" cy="22" r="7.500" fill="#f7b811" />
        <path d="M16 16h7q7 1 7 7 0 7-7 7-8-1-7-14z" fill="#dd4a40" />
      </Svg>
    ),
  },
  {
    name: "浏览器",
    icon: (
      <Svg size={30}>
        <circle cx="15" cy="15" r="15" fill="#f6fbff" />
        <path d="M24 19q-3 6-9 6-9-1-9-10 1-9 9-9 9 0 9.500 9.500H8" stroke="#2d85ea" strokeWidth="4" />
        <path d="M4 28Q12 8 28 2" stroke="#2d85ea" strokeWidth="2" />
      </Svg>
    ),
  },
  {
    name: "Internet Explorer",
    icon: (
      <Svg size={32}>
        <path d="M27 20q-2 6-9 6-8-1-8-10 1-9 8-9 9 1 9 10H12" stroke="#2f9be0" strokeWidth="4.500" />
        <path d="M30 7Q31 0 23 2 8 8 2 24q-2 8 8 5" stroke="#e8b132" strokeWidth="2.500" />
      </Svg>
    ),
  },
  {
    name: "资源管理器",
    open: true,
    stack: true,
    icon: (
      <Svg size={32}>
        <path d="M1 4h9l2 3h19v20H1z" fill="#f3dc84" stroke="#c8a64a" />
        <path d="M4 2h4v2H4z" fill="#22b14c" />
        <path d="M12 5h5v2h-5z" fill="#d9412e" />
        <path d="M20 7h6v2h-6z" fill="#3b9be8" />
        <path d="M2 10h28v16H2z" fill="#fbe99f" />
        <path d="M7 30v-9h18v9" stroke="#8cc7e8" strokeWidth="5" />
      </Svg>
    ),
  },
  {
    name: "媒体播放器",
    icon: (
      <Svg size={28}>
        <path d="M8 3h18v22H8z" fill="#7fb9dc" />
        <path d="M2 2h20v24H2z" fill="#a8cfe6" stroke="#6ba5c8" />
        <circle cx="12" cy="14" r="9" fill="#f47a1f" />
        <path d="M9 8v12l9-6z" fill="#fff" />
      </Svg>
    ),
  },
  {
    name: "百度网盘",
    icon: (
      <Svg size={32}>
        <path d="M0 0h32v32H0z" fill="#3fb1ee" />
        <circle cx="16" cy="11" r="4.500" stroke="#fff" strokeWidth="3" />
        <circle cx="9" cy="20" r="4.500" stroke="#fff" strokeWidth="3" />
        <circle cx="23" cy="20" r="4.500" stroke="#fff" strokeWidth="3" />
      </Svg>
    ),
  },
  {
    name: "软件管家",
    icon: (
      <Svg size={30}>
        <rect width="30" height="30" rx="2" fill="#1193f7" />
        <path d="M4 4h4v4H4zM4 13h4v4H4zM4 22h4v4H4zM12 4h14v9H12zM12 17h14v9H12z" fill="#fff" />
      </Svg>
    ),
  },
  {
    name: "Adobe Reader",
    open: true,
    stack: true,
    icon: (
      <Svg size={28}>
        <path d="M1 1h26v26H1z" fill="#2a0a0a" stroke="#e3240f" strokeWidth="2" />
        <path d="M6 21q4-1 8-10 2-7 0-6t1 7q3 6 7 5t-4-2-12 4-1 3z" stroke="#fff" strokeWidth="1.300" />
      </Svg>
    ),
  },
  {
    name: "EPLAN",
    open: true,
    icon: (
      <Svg size={32}>
        <path d="M0 0h32v32H0z" fill="#000" />
        <path d="M27 21q-3 7-10 7-10-1-9-12Q10 5 18 5q9 1 8 11H11" stroke="#e00a1e" strokeWidth="6.500" />
      </Svg>
    ),
  },
  {
    name: "Excel",
    open: true,
    icon: (
      <Svg w={32} h={30}>
        <path d="M1 26V8q1-7 8-7h17v6" fill="#dcefd3" stroke="#52a02a" strokeWidth="2" />
        <path d="M6 6l25 2-2 21-24-3z" fill="#f4faf1" />
        <path d="M20 10h9M20 15h9M7 21h22M7 25h20" stroke="#79b35b" strokeWidth="3" strokeDasharray="6 1.500" />
        <path d="M8 7l8 11M16 7L7 18" stroke="#2c6e1c" strokeWidth="3.500" />
      </Svg>
    ),
  },
  {
    name: "看图",
    open: true,
    icon: (
      <Svg size={32}>
        <path d="M16 16Q8 8 16 1q10-2 13 7z" fill="#b23ae8" />
        <path d="M16 16q4-9 13-6 5 8-1 14z" fill="#f0462b" />
        <path d="M16 16q10 2 9 12-8 5-15 2z" fill="#f9dc1a" />
        <path d="M16 16q0 10-9 11-6-5-6-12z" fill="#35cf6d" />
        <path d="M16 16Q5 20 2 12 4 3 12 2z" fill="#3f8ff5" />
        <circle cx="16" cy="16" r="2.500" fill="#fff" />
      </Svg>
    ),
  },
  {
    name: "Word",
    open: true,
    icon: (
      <Svg w={32} h={30}>
        <path d="M1 26V8q1-7 8-7h15" stroke="#d5e3f7" strokeWidth="2" />
        <path d="M8 1l22 3-2 25-21-2z" fill="#eef4fd" />
        <path d="M21 9h6M21 13h6M20 17h7M10 21h16M10 24h14" stroke="#2c57a6" strokeWidth="1.800" />
        <path d="M10 7l1 10 4-8 1 8 4-10" stroke="#2c57a6" strokeWidth="2.500" />
      </Svg>
    ),
  },
  { name: "Creo Parametric", open: true, active: true, stack: true, icon: <CreoIcon size={32} /> },
];

function Taskbar() {
  return (
    <div className="relative flex h-10 items-stretch gap-1 border-t border-[#9fb2d0] bg-linear-to-r from-[#1c3266] via-[#23468f] via-30% to-[#27497c]">
      <button aria-label="开始" className="flex w-[52px] items-center justify-center">
        <Svg size={38}>
          <circle cx="19" cy="19" r="18" fill="#1c4f7c" stroke="#8fb2cf" />
          <path d="M3 19a16 16 0 0 1 32 0q-16 5-32 0z" fill="#6d93b0" />
          <path d="M10 11q5-2 8 0l-2 8q-4-2-8 0z" fill="#e8542a" />
          <path d="M20 11q4 2 9 0l-2 8q-5 2-9 0z" fill="#86c232" />
          <path d="M8 20q4-2 8 0l-2 7q-4-2-8 0z" fill="#44a5e8" />
          <path d="M18 21q4 2 9 0l-2 7q-5 2-9 0z" fill="#fbc52c" />
        </Svg>
      </button>
      {taskItems.map((t) => (
        <button key={t.name} aria-label={t.name} className="flex w-[58px] shrink-0">
          <span
            className={clsx(
              "flex h-full flex-1 items-center justify-center",
              t.open && "rounded-sm border border-[#aab9d6]",
              t.open && !t.active && "bg-linear-to-br from-[#8496bd] to-[#34549a]",
              t.active && "bg-linear-to-br from-[#e6eaf3] to-[#7d92c2]"
            )}
          >
            {t.icon}
          </span>
          {t.stack && <span className="h-full w-[3px] rounded-r-sm border-r border-[#8fa3c8]" />}
          {t.stack && <span className="h-full w-[3px] rounded-r-sm border-r border-[#7389b5]" />}
        </button>
      ))}
      <div className="ml-auto flex items-center gap-2 pr-0.5 text-white">
        <IconButton label="输入法" className="mr-1 w-5">
          <Svg w={16} h={14}><path d="M1 6h14v8H1z" fill="#ddd" /><path d="M3 8h10M3 10h10M3 12h10" stroke="#555" strokeDasharray="1.500 1" /><path d="M8 5q0-3 3-2t4-2" stroke="#ddd" /></Svg>
        </IconButton>
        <IconButton label="显示隐藏图标" className="w-4"><Svg w={8} h={4}><path d="M0 4h8L4 0z" fill="#fff" /></Svg></IconButton>
        <IconButton label="通知" className="w-4">
          <Svg><path d="M8 1q5 0 5 6l2 5H1l2-5q0-6 5-6zM6 13h4q-2 3-4 0z" fill="#fff" /></Svg>
        </IconButton>
        <IconButton label="安全卫士" className="w-4">
          <Svg><circle cx="8" cy="8" r="8" fill="#8ccf1b" /><path d="M8 0a8 8 0 0 1 5 14Q11 4 2 3.500 5 0 8 0z" fill="#f6d322" /><path d="M8 4v8M4 8h8" stroke="#fff" strokeWidth="2" /></Svg>
        </IconButton>
        <IconButton label="操作中心" className="w-4">
          <Svg><path d="M2 1v15" stroke="#fff" strokeWidth="1.500" /><path d="M3 2h10v7H3z" fill="#eee" /><circle cx="11" cy="11" r="4.500" fill="#d9332b" /><path d="M9 9l4 4M13 9l-4 4" stroke="#fff" strokeWidth="1.300" /></Svg>
        </IconButton>
        <IconButton label="网络" className="w-4">
          <Svg><path d="M5 4h10v8H5zM7 15h7M2 1v14h4M0 3h4" stroke="#fff" strokeWidth="1.500" /></Svg>
        </IconButton>
        <IconButton label="音量" className="w-4">
          <Svg><path d="M1 5h3l4-4v14l-4-4H1z" fill="#fff" /><path d="M10 5q2 3 0 6M12 3q4 5 0 10" stroke="#fff" strokeWidth="1.200" /></Svg>
        </IconButton>
        <div className="ml-1 w-14 text-center text-xs leading-[17px]">
          <p>11:16</p>
          <p>2018/5/21</p>
        </div>
        <button aria-label="显示桌面" className="h-full w-3 border border-[#8fa3c8] bg-[#3b5687]" />
      </div>
    </div>
  );
}

function Watermark() {
  return (
    <div className="pointer-events-none absolute right-1.5 bottom-1.5 flex h-[61px] w-[205px] items-center bg-white/25">
      <Svg w={66} h={60}>
        <ellipse cx="22" cy="22" rx="12" ry="22" transform="rotate(-35 22 22)" stroke="#5f7890" strokeWidth="3" opacity="0.700" />
        <ellipse cx="42" cy="38" rx="11" ry="20" transform="rotate(32 42 38)" stroke="#b03a55" strokeWidth="3" opacity="0.650" />
      </Svg>
      <div className="flex-1 whitespace-nowrap">
        <p className="pl-1 text-[30px] leading-8 font-bold text-[#2f9e62]/70">野火论坛</p>
        <p className="text-sm leading-6 text-[#2e5f86]/80">www.proewildfire.cn</p>
      </div>
    </div>
  );
}

export default function App() {
  return (
    <div
      lang="zh-CN"
      className="relative flex min-h-screen flex-col overflow-hidden bg-[#e8eaee] font-['Noto_Sans','Noto_Sans_CJK_SC',sans-serif]"
    >
      <div className="flex flex-1">
        <main className="relative flex min-w-0 flex-1 flex-col border-4 border-[#b8bdc0]">
          <TitleBar />
          <RibbonTabs />
          <Ribbon />
          <div className="flex flex-1">
            <ModelTree />
            <div className="relative flex-1 bg-[#e8eaee]">
              <Sketch />
              <ViewToolbar />
            </div>
          </div>
          <StatusBar />
          <SpeedWidget />
        </main>
        <BackgroundApp />
      </div>
      <Taskbar />
      <Watermark />
      <RelationsDialog />
      <VerifyDialog />
    </div>
  );
}
